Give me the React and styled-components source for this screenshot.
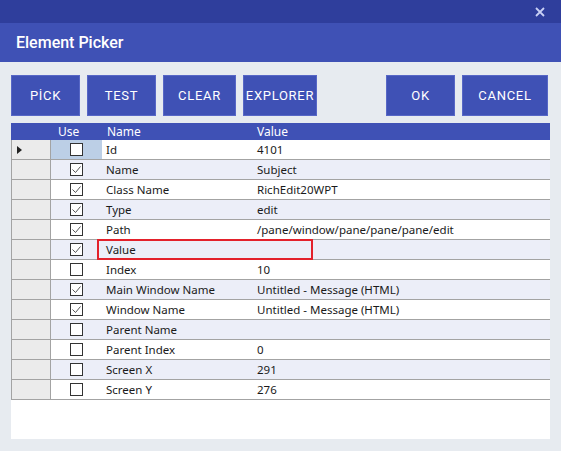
import styled, { createGlobalStyle } from "styled-components";

const rows = [
    { name: "Id", value: "4101", used: false, current: true },
    { name: "Name", value: "Subject", used: true },
    { name: "Class Name", value: "RichEdit20WPT", used: true },
    { name: "Type", value: "edit", used: true },
    { name: "Path", value: "/pane/window/pane/pane/pane/edit", used: true },
    { name: "Value", value: "", used: true, flagged: true },
    { name: "Index", value: "10", used: false },
    { name: "Main Window Name", value: "Untitled - Message (HTML)", used: true },
    { name: "Window Name", value: "Untitled - Message (HTML)", used: true },
    { name: "Parent Name", value: "", used: false },
    { name: "Parent Index", value: "0", used: false },
    { name: "Screen X", value: "291", used: false },
    { name: "Screen Y", value: "276", used: false },
];

export default function App() {
    return (
        <>
            <GlobalStyle />
            <Window>
                <TopBar>
                    <CloseButton aria-label="close">
                        <svg width="10" height="10" viewBox="0 0 10 10">
                            <path d="M1 1 L9 9 M9 1 L1 9" stroke="#c9d0f5" strokeWidth="1.8" />
                        </svg>
                    </CloseButton>
                </TopBar>
                <TitleBar>Element Picker</TitleBar>

                <Body>
                    <Toolbar>
                        <Group>
                            <Button $w={69}>PİCK</Button>
                            <Button $w={69}>TEST</Button>
                            <Button $w={73}>CLEAR</Button>
                            <Button $w={74}>EXPLORER</Button>
                        </Group>
                        <Group>
                            <Button $w={69}>OK</Button>
                            <Button $w={86}>CANCEL</Button>
                        </Group>
                    </Toolbar>

                    <Table>
                        <HeaderRow>
                            <span />
                            <HeadCell $pad={8}>Use</HeadCell>
                            <HeadCell $pad={6}>Name</HeadCell>
                            <HeadCell $pad={5}>Value</HeadCell>
                        </HeaderRow>
                        {rows.map((r, i) => (
                            <Row key={r.name} $alt={i % 2 === 1}>
                                <RowHeader>{r.current && <Arrow />}</RowHeader>
                                <UseCell $current={r.current}>
                                    <Check>
                                        {r.used && (
                                            <svg width="11" height="11" viewBox="0 0 11 11">
                                                <polyline points="1.5,5.5 4.5,8.5 9.5,2.5" fill="none" stroke="#555" strokeWidth="1" />
                                            </svg>
                                        )}
                                    </Check>
                                </UseCell>
                                <Cell>{r.name}</Cell>
                                <Cell>{r.value}</Cell>
                                {r.flagged && <Highlight />}
                            </Row>
                        ))}
                    </Table>
                </Body>
            </Window>
        </>
    );
}

const GlobalStyle = createGlobalStyle`
    html, body {
        margin: 0;
        padding: 0;
        background: #e7ebf0;
    }
`;

const Window = styled.div`
    width: 561px;
    height: 451px;
    display: flex;
    flex-direction: column;
    background: #e7ebf0;
    overflow: hidden;
    font-family: Roboto, "Noto Sans", sans-serif;
`;

const TopBar = styled.div`
    height: 23px;
    background: #2f3e9c;
    display: flex;
    justify-content: flex-end;
    align-items: center;
    padding-right: 15px;
`;

const CloseButton = styled.div`
    display: flex;
    align-items: center;
    justify-content: center;
    width: 12px;
    height: 12px;
`;

const TitleBar = styled.div`
    height: 39px;
    background: #3f51b5;
    color: #fff;
    font-size: 16px;
    font-weight: 500;
    display: flex;
    align-items: center;
    padding-left: 16px;
`;

const Body = styled.div`
    flex: 1;
    display: flex;
    flex-direction: column;
    padding: 13px 11px 12px 11px;
    gap: 7px;
`;

const Toolbar = styled.div`
    display: flex;
    justify-content: space-between;
    padding-right: 2px;
`;

const Group = styled.div`
    display: flex;
    gap: 7px;
`;

const Button = styled.div`
    width: ${({ $w }) => $w}px;
    height: 41px;
    box-sizing: border-box;
    background: #3f51b5;
    border: 1px solid #5767c6;
    color: #fff;
    font-size: 13px;
    font-weight: 400;
    letter-spacing: 0.7px;
    display: flex;
    align-items: center;
    justify-content: center;
`;

const Table = styled.div`
    flex: 1;
    background: #fff;
    display: flex;
    flex-direction: column;
    font-family: "Noto Sans", "Open Sans", sans-serif;
    font-size: 11.5px;
    color: #1a1a1a;
`;

const columns = "39px 51px 151px 1fr";

const HeaderRow = styled.div`
    display: grid;
    grid-template-columns: ${columns};
    height: 17px;
    background: #3f51b5;
    color: #fff;
    font-size: 12px;
    align-items: center;
`;

const HeadCell = styled.div`
    padding-left: ${({ $pad }) => $pad}px;
`;

const Row = styled.div`
    position: relative;
    display: grid;
    grid-template-columns: ${columns};
    height: 20px;
    box-sizing: border-box;
    border-bottom: 1px solid #a3a3a3;
    border-left: 1px solid #a3a3a3;
    background: ${({ $alt }) => ($alt ? "#eceef8" : "#fff")};
    align-items: stretch;
`;

const RowHeader = styled.div`
    background: #ebebeb;
    border-right: 1px solid #a3a3a3;
    display: flex;
    align-items: center;
    padding-left: 5px;
`;

const Arrow = styled.div`
    width: 0;
    height: 0;
    border-top: 4px solid transparent;
    border-bottom: 4px solid transparent;
    border-left: 5px solid #222;
`;

const UseCell = styled.div`
    display: flex;
    align-items: center;
    justify-content: center;
    background: ${({ $current }) => ($current ? "#bccfe6" : "transparent")};
`;

const Check = styled.div`
    width: 13px;
    height: 13px;
    box-sizing: border-box;
    border: 1px solid #333;
    background: #fff;
    display: flex;
    align-items: center;
    justify-content: center;
`;

const Cell = styled.div`
    display: flex;
    align-items: center;
    padding-left: 4px;
    white-space: nowrap;
`;

const Highlight = styled.div`
    position: absolute;
    left: 85px;
    top: -1px;
    width: 216px;
    height: 21px;
    box-sizing: border-box;
    border: 2px solid #e3212b;
    pointer-events: none;
`;
